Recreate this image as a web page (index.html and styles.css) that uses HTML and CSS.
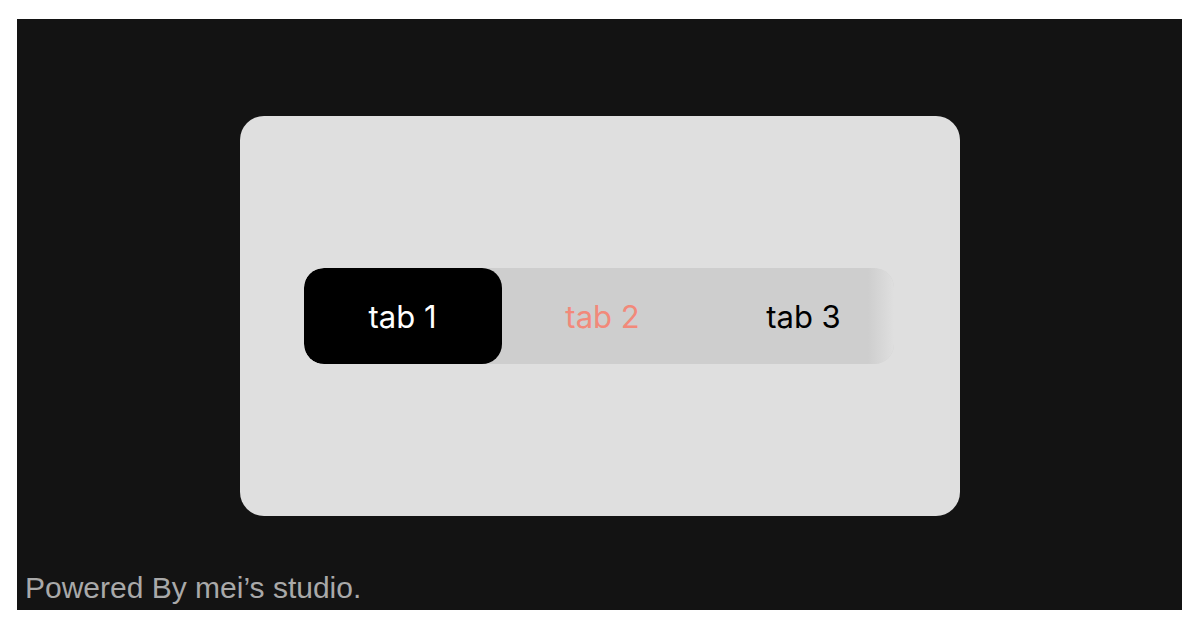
FILE: index.html
```html
<!DOCTYPE html>
<html lang="en">
<head>
    <meta charset="UTF-8">
    <meta name="viewport" content="width=device-width, initial-scale=1.0">
    <title>Tabs</title>
    <link rel="stylesheet" href="styles.css">
</head>
<body>
    <div class="stage">
        <main class="stage-main">
            <!-- Tab card -->
            <div class="card">
                <div class="tabs">
                    <button class="tab active">tab 1</button>
                    <button class="tab hover">tab 2</button>
                    <button class="tab">tab 3</button>
                </div>
            </div>
        </main>

        <footer>
            <p>Powered By mei’s studio.</p>
        </footer>
    </div>
</body>
</html>
```

FILE: styles.css
```css
body {
    margin: 0;
    background-color: white;
}

.stage {
    margin: 19px 18px 20px 17px;
    height: 591px;
    background-color: #131313;
    display: flex;
    flex-direction: column;
}

.stage-main {
    display: flex;
    justify-content: center;
    padding-top: 97px;
}

.card {
    width: 720px;
    height: 400px;
    background-color: #dfdfdf;
    border-radius: 24px;
    display: flex;
    align-items: center;
    justify-content: center;
}

.tabs {
    position: relative;
    width: 590px;
    height: 96px;
    margin-right: 2px;
    display: flex;
    background-color: #cecece;
    border-radius: 20px;
    overflow: hidden;
}

/* fade on the right edge of the strip */
.tabs::after {
    content: "";
    position: absolute;
    top: 0;
    right: 0;
    width: 26px;
    height: 100%;
    background: linear-gradient(to right, rgba(223, 223, 223, 0), #dfdfdf);
}

.tab {
    flex: 0 0 200px;
    height: 96px;
    border: none;
    background: none;
    padding: 0;
    font-family: Inter, "Noto Sans", sans-serif;
    font-size: 31px;
    color: black;
    cursor: pointer;
}

.tab.active {
    flex-basis: 198px;
    background-color: black;
    color: white;
    border-radius: 20px;
}

.tab.hover {
    flex-basis: 202px;
    color: #f2897a;
}

footer {
    margin-top: auto;
    padding: 0 0 5px 8px;
}

footer p {
    margin: 0;
    font-family: "Liberation Sans", Arial, sans-serif;
    font-size: 30px;
    color: #a9a9a9;
}
```
